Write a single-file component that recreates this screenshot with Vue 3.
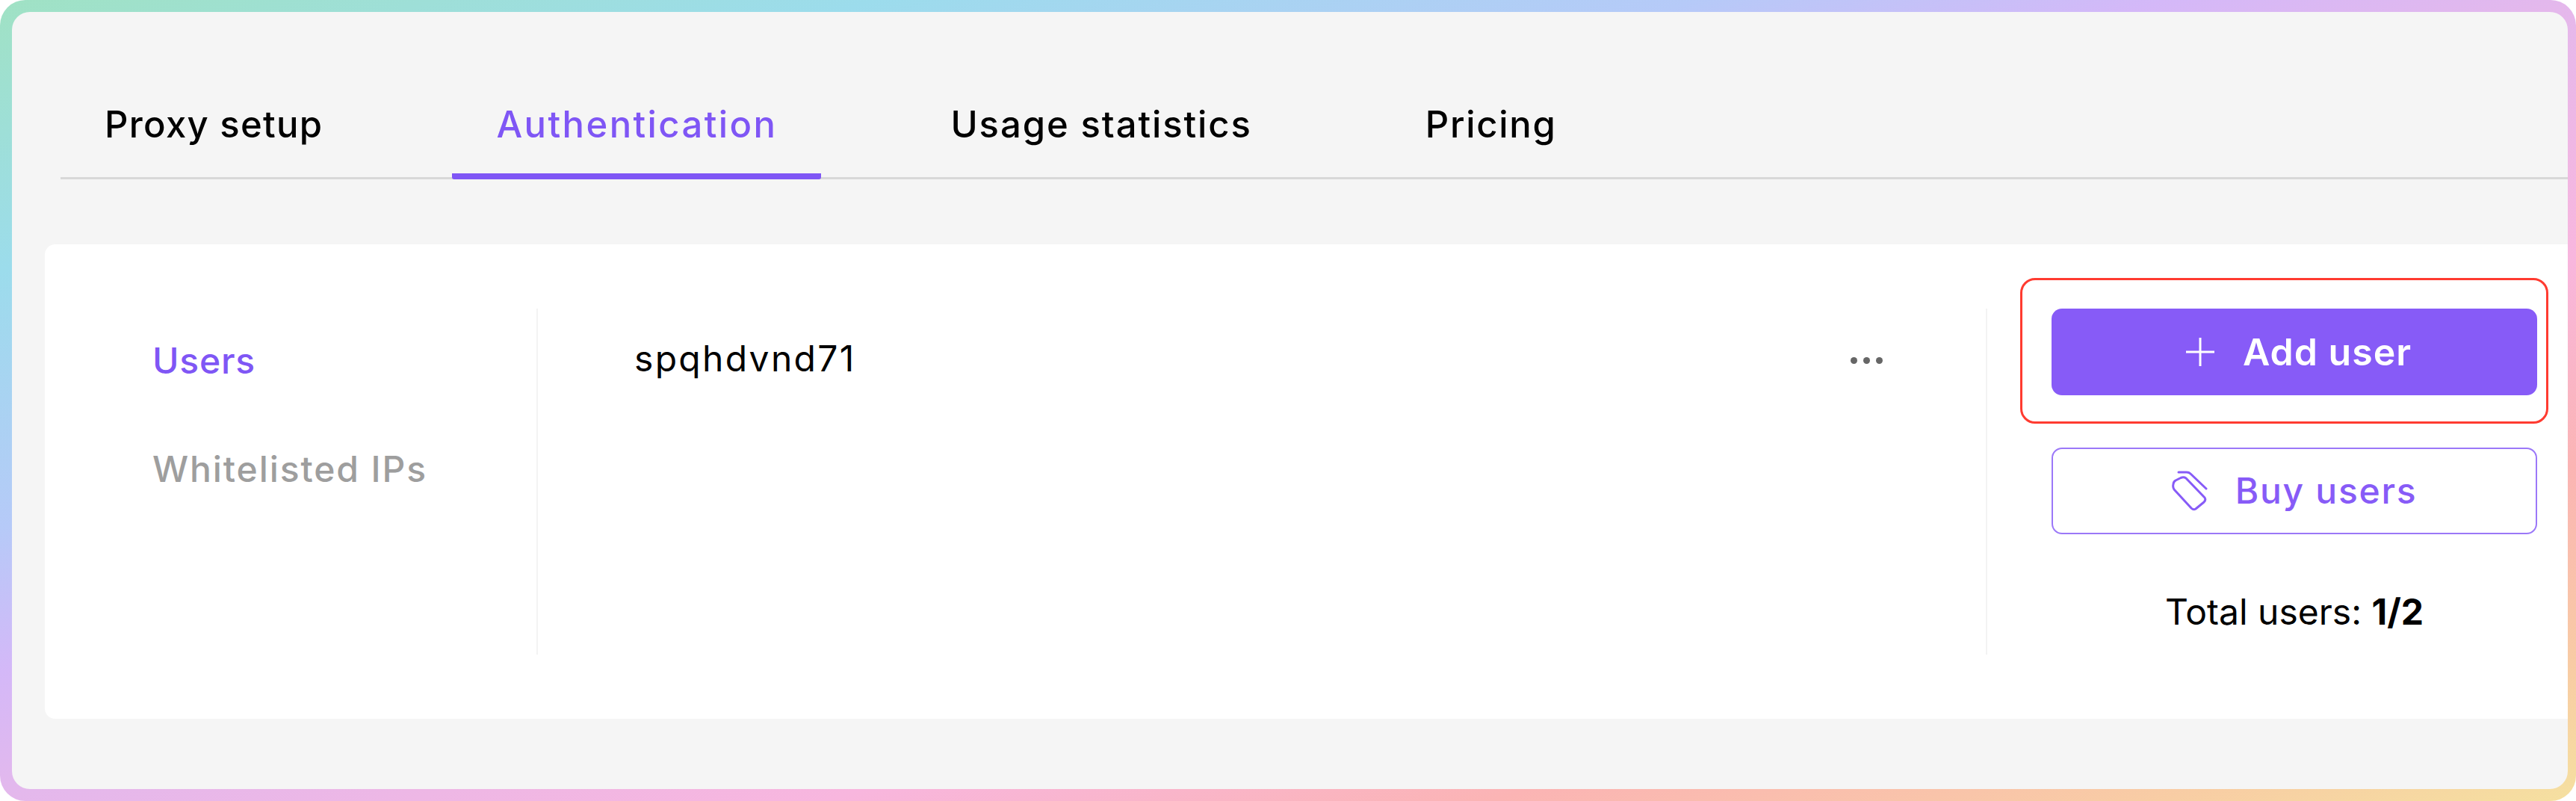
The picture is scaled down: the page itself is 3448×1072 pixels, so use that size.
<script setup>
const tabs = [
  { label: 'Proxy setup', active: false, spacing: 1.3 },
  { label: 'Authentication', active: true, spacing: 2.4 },
  { label: 'Usage statistics', active: false, spacing: 1.9 },
  { label: 'Pricing', active: false, spacing: 1.7 },
]
const sideItems = [
  { label: 'Users', on: true, spacing: 0.8 },
  { label: 'Whitelisted IPs', on: false, spacing: 1.9 },
]
</script>

<template>
  <div class="frame">
    <div class="panel">
      <nav class="tabs">
        <div
          v-for="t in tabs"
          :key="t.label"
          class="tab"
          :class="{ active: t.active }"
          :style="{ letterSpacing: t.spacing + 'px' }"
        >{{ t.label }}</div>
      </nav>
      <section class="card">
        <aside class="side">
          <div
            v-for="s in sideItems"
            :key="s.label"
            class="side-item"
            :class="{ on: s.on }"
            :style="{ letterSpacing: s.spacing + 'px' }"
          >{{ s.label }}</div>
        </aside>
        <main class="list">
          <span class="user">spqhdvnd71</span>
          <span class="dots"><i></i><i></i><i></i></span>
        </main>
        <div class="actions">
          <div class="highlight">
            <button class="btn primary">
              <svg class="plus" viewBox="0 0 38 38" width="38" height="38"><path d="M19 0V38M0 19H38" stroke="#fff" stroke-width="3" fill="none"/></svg>
              <span>Add user</span>
            </button>
          </div>
          <button class="btn outline">
            <svg class="tag" viewBox="0 0 48 54" width="48" height="54" fill="none" stroke="#875bf7" stroke-width="3" stroke-linecap="round" stroke-linejoin="round">
              <path d="M2 18Q2 15 5 13L12 9.5Q16 8 19 10L44 36Q46 39 43 42L32 51Q29 53 26 50L3 25Q1 22 2 18Z"/>
              <path d="M9 2H20Q23 2 25 4L46 24"/>
            </svg>
            <span>Buy users</span>
          </button>
          <p class="total">Total users: <b>1/2</b></p>
        </div>
      </section>
    </div>
  </div>
</template>

<style>
html, body { margin: 0; background: #fff; }
</style>

<style scoped>
.frame {
  width: 3448px;
  height: 1072px;
  box-sizing: border-box;
  padding: 16px 11px 16px 16px;
  border-radius: 34px;
  background: linear-gradient(to bottom right, #a0e2c4 0%, #9cdcec 17%, #b6caf8 33%, #d4b8f8 42%, #e4b8ec 50%, #f8b6de 66%, #fbb4b4 79%, #f8cda4 92%, #f5e0a0 100%);
}
.panel {
  height: 100%;
  box-sizing: border-box;
  padding: 0 0 94px 44px;
  background: #f5f5f5;
  border-radius: 24px;
  display: flex;
  flex-direction: column;
}
.tabs {
  display: flex;
  gap: 114px;
  height: 224px;
  margin-left: 21px;
  box-sizing: border-box;
  padding-top: 116px;
  border-bottom: 3px solid #d8d8d8;
  flex: none;
  align-items: flex-start;
}
.tab {
  font: 500 49px/70px Inter, sans-serif;
  color: #000;
  padding: 0 59px;
  height: 108px;
  box-sizing: border-box;
  white-space: nowrap;
}
.tab.active {
  color: #7f56f5;
  border-bottom: 8px solid #7f56f5;
  border-radius: 0 0 3px 3px;
}
.card {
  margin-top: 87px;
  flex: 1;
  background: #fff;
  border-radius: 14px 0 0 14px;
  display: flex;
  padding: 86px 0 86px;
}
.side {
  width: 660px;
  box-sizing: border-box;
  padding: 0 0 0 144px;
  border-right: 2px solid #f3f3f3;
  flex: none;
}
.side-item {
  font: 500 48px/70px Inter, sans-serif;
  color: #9e9e9e;
  margin-top: 75px;
  white-space: nowrap;
}
.side-item.on {
  color: #7f56f5;
  margin-top: 35px;
}
.list {
  width: 1940px;
  box-sizing: border-box;
  padding: 0 138px 0 129px;
  display: flex;
  justify-content: space-between;
  align-items: flex-start;
  border-right: 2px solid #f3f3f3;
  flex: none;
}
.user {
  font: 400 48px/70px Inter, sans-serif;
  letter-spacing: 2.3px;
  color: #000;
  margin-top: 32px;
}
.dots {
  display: flex;
  gap: 8px;
  margin-top: 65px;
}
.dots i {
  width: 9px;
  height: 9px;
  border-radius: 50%;
  background: #666;
}
.actions {
  flex: none;
  margin-left: 86px;
  width: 650px;
  display: flex;
  flex-direction: column;
  align-items: stretch;
}
.highlight {
  margin: -41px -15px 0 -42px;
  padding: 38px 12px 35px 39px;
  border: 3px solid #ff3b30;
  border-radius: 20px;
}
.btn {
  width: 650px;
  height: 116px;
  box-sizing: border-box;
  border-radius: 14px;
  font: 600 50px/1 Inter, sans-serif;
  display: flex;
  align-items: center;
  justify-content: center;
  padding: 0;
}
.primary {
  background: #875bf7;
  color: #fff;
  border: 0;
  gap: 38px;
  padding-left: 12px;
  letter-spacing: 1px;
}
.outline {
  margin-top: 32px;
  background: #fff;
  color: #875bf7;
  border: 2px solid #9b78f8;
  font-weight: 500;
  font-size: 48px;
  letter-spacing: 1.7px;
  gap: 37px;
}
.total {
  margin: 69px 0 0;
  text-align: center;
  font: 400 48px/70px Inter, sans-serif;
  color: #000;
}
.total b { font-weight: 700; }
</style>
